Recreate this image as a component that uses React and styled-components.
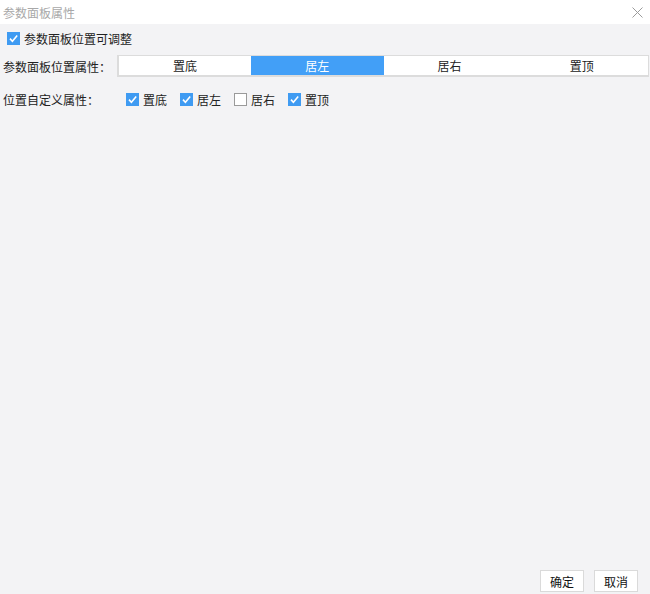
import React, { useState } from "react";
import styled, { createGlobalStyle } from "styled-components";

const Global = createGlobalStyle`
  html, body { margin: 0; padding: 0; }
  body {
    width: 650px; height: 594px; overflow: hidden;
    font-family: "Microsoft YaHei", "Noto Sans CJK SC", "Noto Sans", sans-serif;
    font-size: 12px; color: #222;
  }
  #root { height: 594px; }
`;

const Dialog = styled.div`
  width: 650px; height: 594px;
  display: flex; flex-direction: column;
  background: #f3f3f5;
`;

const TitleBar = styled.div`
  height: 24px; flex: none;
  background: #fff;
  display: flex; align-items: center; justify-content: space-between;
  padding: 0 6px 0 3px;
  color: #a8a8a8;
  font-size: 12px;
`;

const CloseBtn = styled.button`
  border: 0; background: transparent; padding: 0;
  width: 12px; height: 12px; display: flex; align-items: center; justify-content: center;
  margin-right: 1px;
  cursor: pointer;
`;

const Body = styled.div`
  flex: 1;
  display: flex; flex-direction: column;
  padding: 7px 1px 0 3px;
`;

const Row = styled.div`
  display: flex; align-items: center;
  height: ${(p) => p.$h || 22}px;
  margin-top: ${(p) => p.$mt || 0}px;
`;

const Label = styled.div`
  width: ${(p) => p.$w}px; flex: none;
  white-space: nowrap;
`;

const CheckItem = styled.label`
  display: inline-flex; align-items: center; gap: 4px;
  margin-left: ${(p) => p.$ml || 0}px;
  margin-right: ${(p) => p.$mr || 0}px;
  cursor: pointer;
  white-space: nowrap;
`;

const Box = styled.span`
  width: 13px; height: 13px; box-sizing: border-box; flex: none;
  display: inline-flex; align-items: center; justify-content: center;
  background: ${(p) => (p.$on ? "#3f9bf2" : "#fff")};
  border: 1px solid ${(p) => (p.$on ? "#3f9bf2" : "#9a9a9a")};
`;

const Segments = styled.div`
  flex: 1; display: flex;
  height: 22px; box-sizing: border-box;
  border: 2px solid #dcdcdc;
  border-width: 1px 1px 2px 2px;
  background: #fff;
`;

const Segment = styled.div`
  flex: 1;
  display: flex; align-items: center; justify-content: center;
  background: ${(p) => (p.$active ? "#429ff7" : "#fff")};
  color: ${(p) => (p.$active ? "#fff" : "#222")};
  cursor: pointer;
`;

const Spacer = styled.div`
  flex: 1;
`;

const Footer = styled.div`
  display: flex; justify-content: flex-end; gap: 10px;
  padding: 0 11px 2px 0;
`;

const Button = styled.button`
  width: 44px; height: 22px;
  box-sizing: border-box;
  border: 1px solid #dadada;
  background: #fff;
  font: inherit; font-size: 12px; color: #111;
  padding: 0;
`;

function Check({ on }) {
  return (
    <Box $on={on}>
      {on && (
        <svg width="11" height="11" viewBox="0 0 11 11">
          <path d="M2 5.6 L4.4 8.2 L9.2 2.6" fill="none" stroke="#fff" strokeWidth="1.6" />
        </svg>
      )}
    </Box>
  );
}

export default function App() {
  const [pos, setPos] = useState(1);
  const [custom, setCustom] = useState([true, true, false, true]);
  const [adj, setAdj] = useState(true);
  const segs = ["置底", "居左", "居右", "置顶"];
  return (
    <Dialog>
      <Global />
      <TitleBar>
        <span>参数面板属性</span>
        <CloseBtn aria-label="close">
          <svg width="11" height="11" viewBox="0 0 11 11">
            <path d="M0.5 0.5 L10.5 10.5 M10.5 0.5 L0.5 10.5" stroke="#9b9b9b" strokeWidth="1" />
          </svg>
        </CloseBtn>
      </TitleBar>
      <Body>
        <Row $h={14}>
          <CheckItem $ml={4} onClick={() => setAdj(!adj)}>
            <Check on={adj} />
            <span>参数面板位置可调整</span>
          </CheckItem>
        </Row>
        <Row $mt={10}>
          <Label $w={114}>参数面板位置属性：</Label>
          <Segments>
            {segs.map((s, i) => (
              <Segment key={s} $active={pos === i} onClick={() => setPos(i)}>
                {s}
              </Segment>
            ))}
          </Segments>
        </Row>
        <Row $mt={11}>
          <Label $w={123}>位置自定义属性：</Label>
          {segs.map((s, i) => (
            <CheckItem
              key={s}
              $mr={13}
              onClick={() => setCustom(custom.map((v, j) => (j === i ? !v : v)))}
            >
              <Check on={custom[i]} />
              <span>{s}</span>
            </CheckItem>
          ))}
        </Row>
        <Spacer />
        <Footer>
          <Button>确定</Button>
          <Button>取消</Button>
        </Footer>
      </Body>
    </Dialog>
  );
}
